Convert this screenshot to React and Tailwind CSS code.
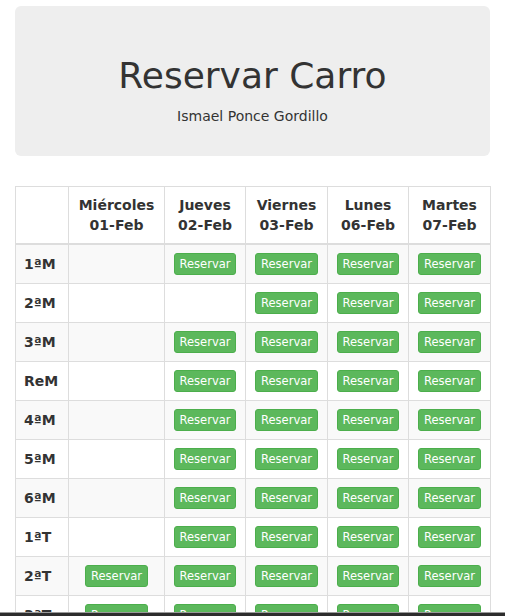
import React from "react";

const days = [
  { name: "Miércoles", date: "01-Feb", w: "w-[96px]" },
  { name: "Jueves", date: "02-Feb", w: "w-[81px]" },
  { name: "Viernes", date: "03-Feb", w: "w-[82px]" },
  { name: "Lunes", date: "06-Feb", w: "w-[81px]" },
  { name: "Martes", date: "07-Feb", w: "w-[82px]" },
];

// 1 = free slot (shows the button), 0 = already taken
const slots = [
  ["1ªM", [0, 1, 1, 1, 1]],
  ["2ªM", [0, 0, 1, 1, 1]],
  ["3ªM", [0, 1, 1, 1, 1]],
  ["ReM", [0, 1, 1, 1, 1]],
  ["4ªM", [0, 1, 1, 1, 1]],
  ["5ªM", [0, 1, 1, 1, 1]],
  ["6ªM", [0, 1, 1, 1, 1]],
  ["1ªT", [0, 1, 1, 1, 1]],
  ["2ªT", [1, 1, 1, 1, 1]],
  ["3ªT", [1, 1, 1, 1, 1]],
  ["4ªT", [1, 1, 1, 1, 1]],
  ["5ªT", [1, 1, 1, 1, 1]],
];

function ReserveButton() {
  return (
    <button className="inline-block align-middle bg-[#5cb85c] border border-[#4cae4c] text-white text-[11.5px] leading-[18px] px-[5px] py-[1px] rounded-[3px] hover:bg-[#449d44]">
      Reservar
    </button>
  );
}

export default function App() {
  return (
    <div className="min-h-screen bg-white text-[#333] text-[14px] leading-[20px] font-['DejaVu_Sans',sans-serif]">
      <div className="px-[15px] pt-[6px]">
        <div className="bg-[#eee] rounded-[6px] pt-[50px] pb-[30px] text-center mb-[30px]">
          <h1 className="text-[36px] leading-[40px] mb-[10px]">Reservar Carro</h1>
          <p>Ismael Ponce Gordillo</p>
        </div>

        <table className="w-full table-fixed border-collapse border border-[#ddd]">
          <thead>
            <tr>
              <th className="w-[53px] border border-[#ddd] border-b-2 p-2"></th>
              {days.map((d) => (
                <th
                  key={d.date}
                  className={`${d.w} border border-[#ddd] border-b-2 p-2 text-center font-bold align-bottom`}
                >
                  {d.name}
                  <br />
                  {d.date}
                </th>
              ))}
            </tr>
          </thead>
          <tbody>
            {slots.map(([label, free], i) => (
              <tr key={label} className={i % 2 === 0 ? "bg-[#f9f9f9]" : "bg-white"}>
                <td className="border border-[#ddd] p-2 h-[38px] font-bold align-middle">{label}</td>
                {free.map((f, j) => (
                  <td key={j} className="border border-[#ddd] p-2 text-center align-middle">
                    {f ? <ReserveButton /> : null}
                  </td>
                ))}
              </tr>
            ))}
          </tbody>
        </table>
      </div>

      <div className="fixed bottom-0 left-0 right-0 h-[4px] bg-[#2d2d2d] border-t border-[#9a9a9a]"></div>
    </div>
  );
}
